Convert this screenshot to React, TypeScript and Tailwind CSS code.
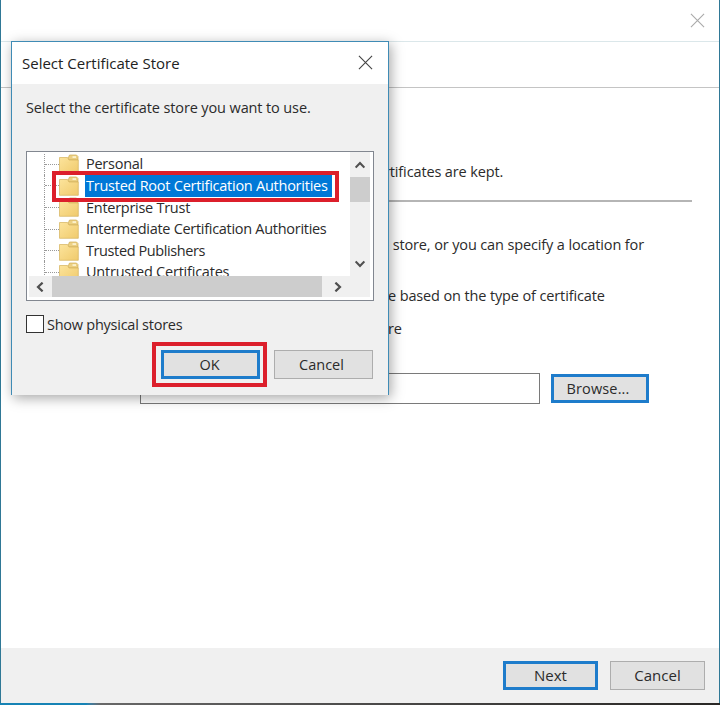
import { clsx } from "clsx"

const stores = [
  { name: "Personal", selected: false, tracking: "tracking-[-0.25px]" },
  { name: "Trusted Root Certification Authorities", selected: true, tracking: "tracking-[-0.25px]" },
  { name: "Enterprise Trust", selected: false, tracking: "tracking-[-0.27px]" },
  { name: "Intermediate Certification Authorities", selected: false, tracking: "tracking-[-0.29px]" },
  { name: "Trusted Publishers", selected: false, tracking: "tracking-[-0.4px]" },
  { name: "Untrusted Certificates", selected: false, tracking: "tracking-[-0.22px]" },
]

function CloseIcon({ className }: { className: string }) {
  return (
    <svg className={className} viewBox="0 0 16 16" fill="none" stroke="currentColor" strokeWidth="1.2">
      <path d="M1 1L15 15M15 1L1 15" />
    </svg>
  )
}

function FolderIcon() {
  return (
    <svg className="h-[20px] w-[20px] shrink-0" viewBox="0 0 20 20">
      <defs>
        <linearGradient id="folder" x1="0" y1="0" x2="1" y2="1">
          <stop offset="0" stopColor="#fce49c" />
          <stop offset="1" stopColor="#f0ca6c" />
        </linearGradient>
      </defs>
      <path d="M9 4.5L10.5 1H17.5L19 2.5V6H9Z" fill="#ecd083" stroke="#d0ad55" strokeWidth=".7" />
      <path d="M13.5 2.3H17V3.8H13.5Z" fill="#fff8dc" />
      <path d="M.5 3.5H8.5L10 6H19.3V19.3H.5Z" fill="url(#folder)" stroke="#d4b25c" strokeWidth=".7" />
    </svg>
  )
}

function Chevron({ className }: { className: string }) {
  return (
    <svg className={clsx("h-[10px] w-[10px]", className)} viewBox="0 0 10 10" fill="none" stroke="#505050" strokeWidth="2.2">
      <path d="M.6 7.6L5 3L9.4 7.6" />
    </svg>
  )
}

function PushButton({ label, primary, className }: { label: string; primary?: boolean; className: string }) {
  return (
    <button
      className={clsx(
        "flex items-center justify-center bg-[#e1e1e1]",
        primary ? "border-3 border-[#1e7ccb]" : "border border-[#adadad]",
        className
      )}
    >
      {label}
    </button>
  )
}

function StoreTree() {
  return (
    <div className="flex h-[150px] w-[348px] flex-col border border-[#828790] bg-white">
      <div className="flex h-[124px]">
        <div className="flex-1 overflow-hidden pt-[1.5px] pl-[17px]">
          {stores.map((store) => (
            <div key={store.name} className="flex h-[21.6px] items-center">
              <div className="flex h-full w-[15px] items-center border-l border-dotted border-[#999]">
                <div className="w-full border-t border-dotted border-[#999]" />
              </div>
              <FolderIcon />
              <span
                className={clsx(
                  "ml-[6px] flex h-full items-center pl-[1px] whitespace-nowrap",
                  store.tracking,
                  store.selected && "w-[247px] bg-[#0078d7] text-white"
                )}
              >
                {store.name}
              </span>
            </div>
          ))}
        </div>
        <div className="mr-[3px] flex w-[20px] flex-col items-center bg-[#f0f0f0]">
          <Chevron className="mt-[8px]" />
          <div className="mt-[7px] h-[25px] w-full bg-[#cdcdcd]" />
          <Chevron className="mt-auto mb-[7px] rotate-180" />
        </div>
      </div>
      <div className="mr-[3px] ml-[2px] flex h-[21px] items-center bg-[#f0f0f0]">
        <Chevron className="ml-[6px] -rotate-90" />
        <div className="ml-[7px] h-full w-[270px] bg-[#cdcdcd]" />
        <Chevron className="ml-[11px] rotate-90" />
      </div>
    </div>
  )
}

function CertificateDialog() {
  return (
    <div className="absolute top-[41px] left-[11px] flex h-[354px] w-[378px] flex-col border border-b-0 border-[#3f8bb5] bg-[#f0f0f0] shadow-[2px_3px_12px_rgba(0,0,0,0.35)]">
      <div className="flex h-[42px] items-center justify-between bg-white pt-[1px] pr-[15px] pl-[10px]">
        <span className="text-[15px] text-[#222]">Select Certificate Store</span>
        <CloseIcon className="mb-[2px] h-[15px] w-[15px] text-[#444]" />
      </div>
      <p className="mt-[14px] ml-[14px] h-[20px] leading-[20px] tracking-[-0.12px]">
        Select the certificate store you want to use.
      </p>
      <div className="mt-[33px] ml-[14px]">
        <StoreTree />
      </div>
      <label className="mt-[14px] ml-[14px] flex h-[18px] items-center gap-[3px]">
        <span className="h-[18px] w-[18px] border border-[#333] bg-white" />
        <span className="pt-[1px] tracking-[-0.25px]">Show physical stores</span>
      </label>
      <div className="mt-[9px] flex justify-end pr-[15px]">
        <div className="mr-[7px] flex h-[45px] w-[115px] items-center justify-center border-[4px] border-[#dc1f2b] pl-[2px]">
          <PushButton label="OK" primary className="h-[29px] w-[99px] pr-[2px]" />
        </div>
        <PushButton label="Cancel" className="mt-[8px] h-[29px] w-[99px] pr-[4px]" />
      </div>
      {/* highlight around the selected store */}
      <div className="absolute top-[129px] left-[40px] h-[31px] w-[287px] border-[4px] border-[#dc1f2b]" />
    </div>
  )
}

export default function App() {
  return (
    <div className="relative flex h-[705px] w-[720px] flex-col overflow-hidden bg-white font-['Open_Sans',sans-serif] text-[14.5px] text-[#2b2b2b]">
      <div className="flex h-[703px] flex-col border-x border-[#2f7896]">
        <header className="flex h-[42px] items-center justify-end border-b border-[#dbe7ea] pr-[14px]">
          <CloseIcon className="h-[15px] w-[15px] text-[#aaa]" />
        </header>
        <div className="h-[46px] border-b border-[#c4c4c4]" />
        <main className="flex flex-1 flex-col whitespace-nowrap tracking-[-0.13px]">
          <p className="mt-[74px] ml-[383px] h-[20px] leading-[20px]">rtificates are kept.</p>
          <div className="mt-[18px] mr-[27px] ml-[139px] border-t-2 border-[#b5b5b5]" />
          <p className="mt-[33px] ml-[380px] h-[20px] leading-[20px]">e store, or you can specify a location for</p>
          <p className="mt-[31px] ml-[387px] h-[20px] leading-[20px]">e based on the type of certificate</p>
          <p className="mt-[13px] ml-[387px] h-[20px] leading-[20px]">re</p>
          <div className="mt-[34px] ml-[139px] flex items-center gap-[11px]">
            <input readOnly className="h-[31px] w-[400px] border border-[#7a7a7a] bg-white" />
            <PushButton label="Browse..." primary className="h-[29px] w-[98px] pr-[4px] tracking-[0.15px]" />
          </div>
        </main>
        <footer className="flex h-[55px] items-center justify-end gap-[12px] bg-[#f0f0f0] pr-[14px] text-[15px]">
          <PushButton label="Next" primary className="h-[29px] w-[95px]" />
          <PushButton label="Cancel" className="h-[29px] w-[95px]" />
        </footer>
      </div>
      <div className="h-[2px] bg-linear-to-r from-[#1683b5] from-12% via-[#686868] via-14% to-[#292725]" />
      <CertificateDialog />
    </div>
  )
}
